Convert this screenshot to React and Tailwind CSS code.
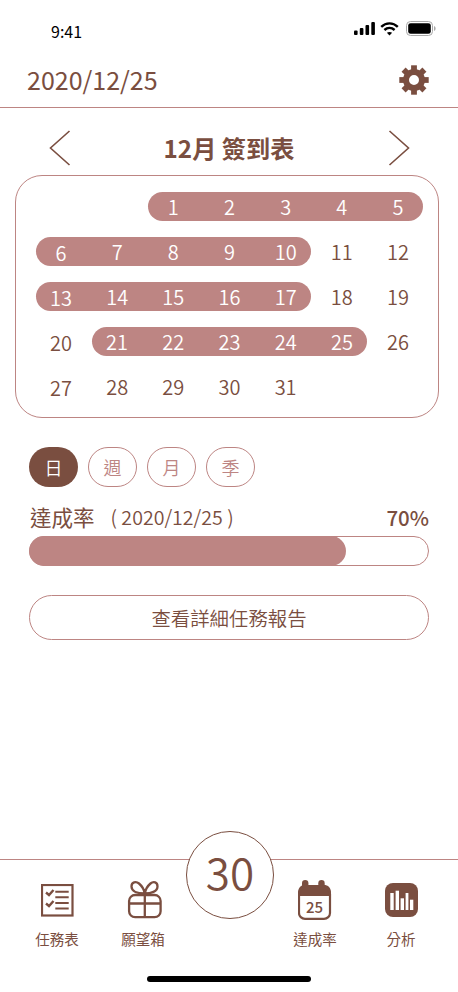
import React from "react";

const weeks = [
  { before: [null, null], pill: [1, 2, 3, 4, 5], after: [], start: "col-start-3" },
  { before: [], pill: [6, 7, 8, 9, 10], after: [11, 12] },
  { before: [], pill: [13, 14, 15, 16, 17], after: [18, 19] },
  { before: [20], pill: [21, 22, 23, 24, 25], after: [26] },
  { before: [], pill: [], after: [27, 28, 29, 30, 31] },
];

const Day = ({ value, first }) => (
  <div className={`flex h-[29px] items-center justify-center ${first ? "pt-[2px]" : ""}`}>{value}</div>
);

const SignalIcon = () => (
  <svg width="21" height="13" viewBox="0 0 21 13" fill="#000">
    <rect x="0" y="8.5" width="3.6" height="4.5" rx="1" />
    <rect x="5.8" y="6" width="3.6" height="7" rx="1" />
    <rect x="11.5" y="3" width="3.6" height="10" rx="1" />
    <rect x="17.3" y="0" width="3.6" height="13" rx="1" />
  </svg>
);

const WifiIcon = () => (
  <svg width="19" height="14" viewBox="0 0 19 14" fill="none" stroke="#000" strokeWidth="2.4">
    <path d="M1.2 4.8 C6 0.2 13 0.2 17.8 4.8" />
    <path d="M4.4 8 C7.4 5.3 11.6 5.3 14.6 8" />
    <path d="M9.5 13.6 L6.9 10.8 C8.4 9.6 10.6 9.6 12.1 10.8 Z" fill="#000" stroke="none" />
  </svg>
);

const BatteryIcon = () => (
  <svg width="30" height="15" viewBox="0 0 30 15">
    <rect x="0.5" y="0.5" width="26" height="14" rx="4" fill="none" stroke="#a9a9a9" />
    <rect x="2.2" y="2.2" width="22.6" height="10.6" rx="2.4" fill="#000" />
    <path d="M28 5 C29.2 5.4 29.6 6.4 29.6 7.5 C29.6 8.6 29.2 9.6 28 10 Z" fill="#a9a9a9" />
  </svg>
);

const GearIcon = () => (
  <svg width="30" height="30" viewBox="0 0 30 30" fill="#7a4e40">
    {[0, 45, 90, 135, 180, 225, 270, 315].map((deg) => (
      <rect key={deg} x="12.1" y="0.3" width="5.8" height="8" transform={`rotate(${deg} 15 15)`} />
    ))}
    <circle cx="15" cy="15" r="8" fill="none" stroke="#7a4e40" strokeWidth="6" />
  </svg>
);

const Chevron = ({ d }) => (
  <svg width="22" height="36" viewBox="0 0 22 36" fill="none" stroke="#7a4e40" strokeWidth="1.6">
    <path d={d} />
  </svg>
);

const ChecklistIcon = () => (
  <svg width="33" height="33" viewBox="0 0 33 33" fill="none" stroke="#7a4e40">
    <rect x="1" y="1" width="30.5" height="30.5" strokeWidth="2.2" />
    <path d="M5 8.5 L8 11 L12.5 6" strokeWidth="2.4" />
    <path d="M5 19.5 L8 22 L12.5 17" strokeWidth="2.4" />
    <path d="M14.3 7.8 H27.7 M14.3 13.3 H27.7 M14.3 19 H27.7 M14.3 24.4 H27.7" strokeWidth="2" />
  </svg>
);

const GiftIcon = () => (
  <svg width="38" height="40" viewBox="0 0 38 40" fill="none" stroke="#7a4e40" strokeWidth="2.3">
    <rect x="5.1" y="15" width="31.5" height="22.2" rx="6" />
    <path d="M5.1 23.5 H36.6 M20.8 15 V37.2" />
    <path d="M20.8 13.5 C14 13.5 7.5 11.5 7.5 6.5 C7.5 2 12 1 15 3.5 C18 6 20 9.5 20.8 13.5 C21.5 9.5 23.5 6 26.5 3.5 C29.5 1 33.5 2 33.5 6.5 C33.5 11.5 27 13.5 20.8 13.5 Z" />
  </svg>
);

const CalendarIcon = () => (
  <svg width="34" height="40" viewBox="0 0 34 40">
    <path d="M0 13 C0 7.5 3 5 7 5 H26 C30 5 33 7.5 33 13 V16 H0 Z" fill="#7a4e40" />
    <rect x="4" y="0" width="6.4" height="10" rx="3.2" fill="#7a4e40" />
    <rect x="20.3" y="0" width="6.4" height="10" rx="3.2" fill="#7a4e40" />
    <rect x="1" y="8" width="31" height="30.9" rx="6" fill="none" stroke="#7a4e40" strokeWidth="2.2" />
    <text x="16.5" y="33" textAnchor="middle" fontSize="15" fontWeight="500" fill="#7a4e40">25</text>
  </svg>
);

const ChartIcon = () => (
  <svg width="33" height="34" viewBox="0 0 33 34">
    <rect width="33" height="34" rx="8" fill="#7a4e40" />
    <g fill="#fff">
      <rect x="5.3" y="10" width="3.4" height="17" />
      <rect x="10.6" y="7.7" width="3.4" height="19.3" />
      <rect x="15.6" y="15.3" width="3.4" height="11.7" />
      <rect x="20.6" y="10" width="2.8" height="17" />
      <rect x="25" y="16.7" width="3.3" height="10.3" />
    </g>
  </svg>
);

const Tab = ({ label, icon }) => (
  <div className="flex w-[86px] flex-col items-center">
    <div className="flex h-[40px] items-center justify-center">{icon}</div>
    <span className="mt-[9px] text-[14.5px] leading-[20px]">{label}</span>
  </div>
);

export default function App() {
  return (
    <div
      className="relative flex h-[992px] w-[458px] flex-col overflow-hidden bg-white text-[#7a4e40]"
      style={{ fontFamily: '"Noto Sans CJK TC", "Noto Sans", sans-serif' }}
    >
      {/* status bar */}
      <div className="flex h-[50px] items-end justify-between pl-[51px] pr-[22px] text-black">
        <span className="mb-[7px] text-[16px] leading-[24px]">9:41</span>
        <div className="mb-[14px] flex items-center gap-[5px]">
          <SignalIcon />
          <WifiIcon />
          <div className="ml-[2px]">
            <BatteryIcon />
          </div>
        </div>
      </div>

      {/* header */}
      <div className="flex h-[58px] items-center justify-between border-b border-[#bd8583] pl-[27px] pr-[29px] pt-[3px]">
        <span className="-mt-[2px] text-[25px] leading-[36px]">2020/12/25</span>
        <GearIcon />
      </div>

      {/* month nav */}
      <div className="flex h-[67px] items-center justify-between pb-[1px] pl-[49px] pr-[48px] pt-[14px]">
        <Chevron d="M20.5 1 L1.5 18 L20.5 35" />
        <span className="-ml-[1px] text-[24.2px] font-bold leading-[34px]">12月 簽到表</span>
        <Chevron d="M1.5 1 L20.5 18 L1.5 35" />
      </div>

      {/* calendar */}
      <div className="mx-[15px] flex h-[243px] w-[424px] flex-col gap-[16px] rounded-[27px] border border-[#bd8583] pl-[17px] pr-[12px] pt-[16px] text-[20px] font-[350]">
        {weeks.map((week, i) => (
          <div key={i} className="grid grid-cols-7">
            {week.before.map((d, j) => (
              <Day key={j} value={d} first={j === 0} />
            ))}
            {week.pill.length > 0 && (
              <div className={`col-span-5 mx-[3px] flex h-[29px] justify-center rounded-full bg-[#bd8583] text-white ${week.start || ""}`}>
                <div className="grid w-[281px] shrink-0 grid-cols-5">
                  {week.pill.map((d, j) => (
                    <Day key={d} value={d} first={j === 0 && week.before.length === 0} />
                  ))}
                </div>
              </div>
            )}
            {week.after.map((d, j) => (
              <Day key={d} value={d} first={j === 0 && week.pill.length === 0} />
            ))}
          </div>
        ))}
      </div>

      {/* period buttons */}
      <div className="ml-[29px] mt-[29px] flex gap-[10px] text-[18px] font-[350]">
        <button className="flex h-[40px] w-[49px] items-center justify-center rounded-[20px] bg-[#7a4e40] text-white">日</button>
        {["週", "月", "季"].map((p) => (
          <button key={p} className="flex h-[40px] w-[49px] items-center justify-center rounded-[20px] border border-[#bd8583] text-[#bd8583]">
            {p}
          </button>
        ))}
      </div>

      {/* rate */}
      <div className="mx-[29px] mt-[14px] flex h-[32px] w-[400px] items-center justify-between">
        <div className="flex items-center">
          <span className="ml-[1px] text-[21.5px]">達成率</span>
          <span className="ml-[16px] text-[19.6px] font-[350]">( 2020/12/25 )</span>
        </div>
        <span className="text-[20.5px] font-medium">70%</span>
      </div>
      <div className="mx-[29px] mt-[3px] h-[30px] w-[400px] rounded-full border border-[#bd8583]">
        <div className="-m-px h-[30px] w-[317px] rounded-full bg-[#bd8583]" />
      </div>

      <button className="mx-[29px] mt-[29px] flex h-[45px] w-[400px] items-center justify-center rounded-full border border-[#bd8583] text-[19.4px] font-[350]">
        查看詳細任務報告
      </button>

      {/* bottom nav */}
      <div className="relative mt-auto h-[133px] border-t border-[#bd8583] pt-[20px]">
        <div className="flex px-[14px]">
          <Tab label="任務表" icon={<ChecklistIcon />} />
          <Tab label="願望箱" icon={<GiftIcon />} />
          <div className="w-[86px]" />
          <Tab label="達成率" icon={<CalendarIcon />} />
          <Tab label="分析" icon={<ChartIcon />} />
        </div>
        <div className="absolute left-[186px] top-[-29px] flex h-[88px] w-[88px] items-center justify-center rounded-full border border-[#7a4e40] bg-white pb-[9px] text-[44px] font-[350] leading-none">
          30
        </div>
        <div className="absolute bottom-[10px] left-[147px] h-[6px] w-[164px] rounded-full bg-black" />
      </div>
    </div>
  );
}
